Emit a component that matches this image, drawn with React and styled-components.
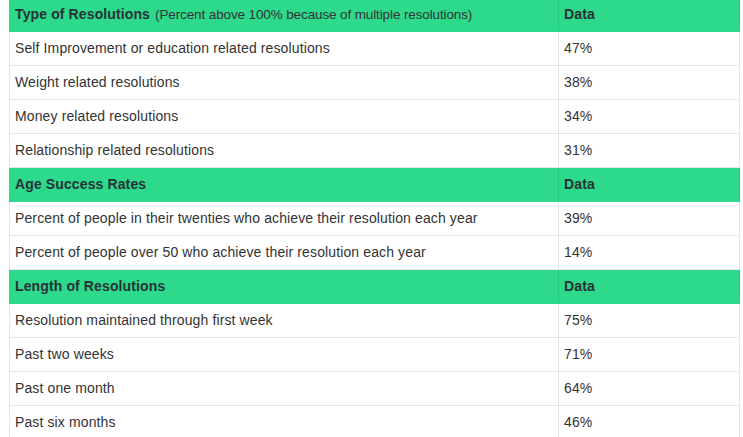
import React from 'react';
import styled, { createGlobalStyle } from 'styled-components';

const GlobalStyle = createGlobalStyle`
  body {
    margin: 0;
    background: #ffffff;
    font-family: "Liberation Sans", Arial, sans-serif;
    overflow: hidden;
  }
`;

const Page = styled.div`
  padding-left: 9px;
  width: 731px;
  margin-top: -3px;
`;

const Table = styled.table`
  width: 100%;
  border-collapse: collapse;
  font-size: 14px;
  letter-spacing: 0.12px;
  color: #333333;
  table-layout: fixed;
  border: 1px solid #e6e6e6;
`;

const Row = styled.tr`
  background: ${(p) => (p.head ? '#2dd98b' : '#ffffff')};
`;

const Cell = styled.td`
  height: 33px;
  padding: 0 5px;
  line-height: 17px;
  vertical-align: middle;
  white-space: nowrap;
  border: 1px solid ${(p) => (p.head ? '#2dd98b' : '#e6e6e6')};
  border-right-color: ${(p) => (p.head ? '#25c87e' : '#e6e6e6')};
  font-weight: ${(p) => (p.head ? 'bold' : 'normal')};
  color: ${(p) => (p.head ? '#263238' : '#333333')};
  width: ${(p) => p.w || 'auto'};
`;

const Note = styled.span`
  font-weight: normal;
  font-size: 13.5px;
  letter-spacing: -0.12px;
  color: #333333;
  margin-left: 1px;
`;

const sections = [
  {
    title: 'Type of Resolutions',
    note: '(Percent above 100% because of multiple resolutions)',
    rows: [
      ['Self Improvement or education related resolutions', '47%'],
      ['Weight related resolutions', '38%'],
      ['Money related resolutions', '34%'],
      ['Relationship related resolutions', '31%'],
    ],
  },
  {
    title: 'Age Success Rates',
    rows: [
      ['Percent of people in their twenties who achieve their resolution each year', '39%'],
      ['Percent of people over 50 who achieve their resolution each year', '14%'],
    ],
  },
  {
    title: 'Length of Resolutions',
    rows: [
      ['Resolution maintained through first week', '75%'],
      ['Past two weeks', '71%'],
      ['Past one month', '64%'],
      ['Past six months', '46%'],
    ],
  },
];

const App = () => (
  <Page>
    <GlobalStyle />
    <Table>
      <tbody>
        {sections.map((s) => (
          <React.Fragment key={s.title}>
            <Row head>
              <Cell head w="538px">
                {s.title} {s.note && <Note>{s.note}</Note>}
              </Cell>
              <Cell head>Data</Cell>
            </Row>
            {s.rows.map(([label, value]) => (
              <Row key={label}>
                <Cell w="538px">{label}</Cell>
                <Cell>{value}</Cell>
              </Row>
            ))}
          </React.Fragment>
        ))}
      </tbody>
    </Table>
  </Page>
);

export default App;
